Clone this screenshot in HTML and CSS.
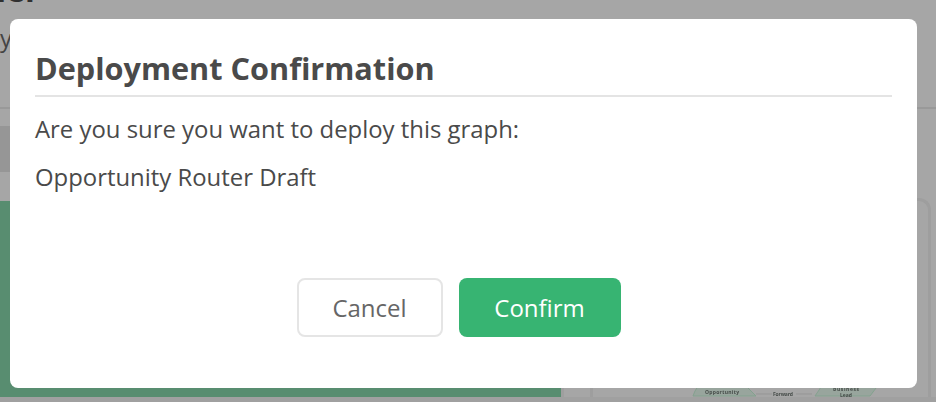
FILE: index.html
```html
<!DOCTYPE html>
<html lang="en">
<head>
<meta charset="utf-8">
<title>Deployment Confirmation</title>
<link rel="stylesheet" href="styles.css">
</head>
<body>
<div class="page">
  <header class="page-header">
    <div class="page-title">ner</div>
    <div class="page-subtitle">y</div>
  </header>
  <div class="toolbar"><div class="tab"></div></div>
  <main class="content">
    <div class="hero"></div>
    <div class="rail"></div>
    <section class="card">
      <svg class="graph" width="200" height="16" viewBox="690 381 200 16">
        <path class="node" d="M693 396Q696 386 705 380H740Q750 390 756 396Z"/>
        <path class="node" d="M815 396Q820 390 824 380H876V388L870 396Z"/>
        <path class="edge" d="M756 394H772M796 394H812"/>
        <text x="722" y="393.5" textLength="34">Opportunity</text>
        <text x="783" y="395.5" textLength="20">Forward</text>
        <text x="846" y="390.5" textLength="26">Business</text>
        <text x="846" y="397">Lead</text>
      </svg>
    </section>
  </main>
</div>
<div class="modal" role="dialog">
  <h1>Deployment Confirmation</h1>
  <p>Are you sure you want to deploy this graph:</p>
  <p>Opportunity Router Draft</p>
  <div class="actions">
    <button class="button cancel">Cancel</button>
    <button class="button confirm">Confirm</button>
  </div>
</div>
</body>
</html>
```
FILE: styles.css
```css
* { box-sizing: border-box; }
body { margin: 0; background: #a6a6a6; font-family: "Open Sans", sans-serif; color: #4a4a4a; }
.page { display: flow-root; width: 936px; height: 402px; overflow: hidden; }
.page-header { display: flow-root; height: 109px; border-bottom: 2px solid #999; }
.page-title { height: 46px; margin: -33px 0 0 -15px; font-size: 32px; font-weight: 700; line-height: 46px; color: #303030; }
.page-subtitle { padding-top: 8px; font-size: 24px; line-height: 34px; color: #444; }
.toolbar { height: 92px; padding-top: 17px; }
.tab { width: 60px; height: 46px; background: #969696; }
.content { display: flex; height: 201px; border-bottom: 5px solid #a0a0a0; }
.hero { width: 561px; height: 196px; background: #588d70; }
.rail { width: 29px; border-left: 3px solid #9f9f9f; }
.card { width: 341px; height: 199px; margin-top: -3px; border: 3px solid #9e9e9e; border-bottom: 0; border-radius: 12px 12px 0 0; display: flex; align-items: flex-end; padding-left: 97px; }
.graph { filter: blur(.6px); }
.graph text { font-size: 5px; font-weight: 700; text-anchor: middle; fill: #454b48; }
.node { fill: #98a59d; stroke: #83a18e; }
.edge { stroke: #959595; }
.modal { position: absolute; left: 10px; top: 19px; width: 907px; height: 369px; padding: 26px 25px; border-radius: 8px; background: #fff; }
h1 { margin: 0 0 12px; height: 52px; border-bottom: 2px solid #e4e4e4; font-size: 30.65px; line-height: 46px; font-weight: 700; }
p { margin: 0 0 8px; font-size: 23.9px; line-height: 40px; }
.actions { display: flex; justify-content: center; gap: 16px; margin: 73px 10px 0 0; }
.button { height: 59px; margin-top: 8px; padding: 0 0 1px; border-radius: 8px; font: 24px "Open Sans", sans-serif; }
.cancel { width: 146px; border: 2px solid #e5e5e5; background: #fff; color: #666; }
.confirm { width: 162px; border: 0; background: #37b472; color: #fff; }
```
